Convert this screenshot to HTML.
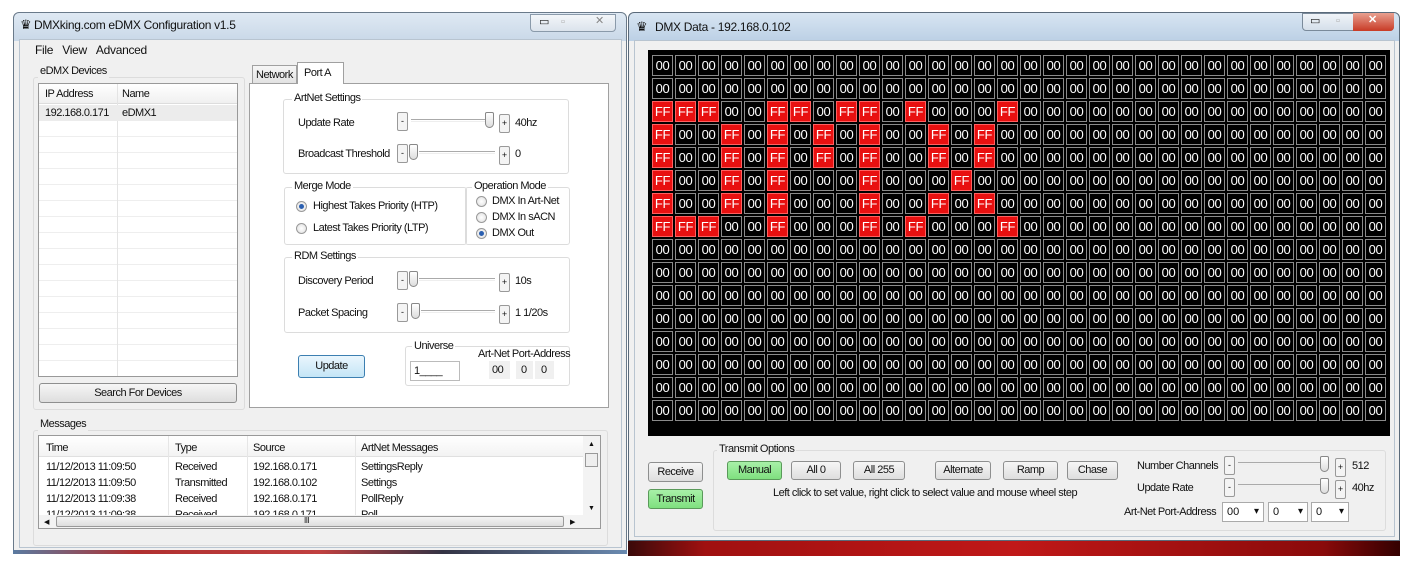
<!DOCTYPE html>
<html><head><meta charset="utf-8"><style>
*{box-sizing:border-box;margin:0;padding:0}
body{width:1414px;height:567px;background:#fff;position:relative;overflow:hidden;font-family:"Liberation Sans",sans-serif;font-size:11px;color:#111}
.a{position:absolute}
.t{position:absolute;white-space:nowrap;font-size:11px;letter-spacing:-0.5px;line-height:13px}
.grp{position:absolute;border:1px solid #dcdcdc;border-radius:3px}
.gl{position:absolute;background:#f0f0f0;padding:0 2px;white-space:nowrap;font-size:11px;letter-spacing:-0.5px;line-height:13px}
.btn{position:absolute;border:1px solid #8e8f8f;border-radius:3px;background:linear-gradient(#f6f6f6,#dedede);text-align:center;font-size:11px;letter-spacing:-0.5px;white-space:nowrap}
.grn{background:linear-gradient(#a8f0a8,#7fe07f);border-color:#5a9a5a}
.sb{position:absolute;border:1px solid #999;border-radius:2px;background:#f4f4f4;width:11px;height:19px;font-size:9px;text-align:center;line-height:17px}
.trk{position:absolute;height:3px;border-top:1px solid #aaa;border-bottom:1px solid #eee}
.th{position:absolute;width:9px;height:16px;border:1px solid #888;border-radius:2px 2px 5px 5px;background:linear-gradient(#fff,#ddd)}
.rad{position:absolute;width:11px;height:11px;border-radius:50%;border:1px solid #999;background:radial-gradient(#fff,#ddd)}
.rad.on::after{content:"";position:absolute;left:2px;top:2px;width:5px;height:5px;border-radius:50%;background:#2a5fb0}
.cb{position:absolute;border:1px solid #aaa;background:#fff;height:20px;font-size:11px;padding:3px 4px}
.cb::after{content:"▾";position:absolute;right:4px;top:3px;font-size:10px}
#grid{position:absolute;left:648px;top:50px;width:742px;height:386px;background:#000}
.c{position:absolute;width:21px;height:21px;border:1px solid #8a8a8a;color:#fff;font-size:13px;text-align:center;line-height:19px;letter-spacing:-0.3px}
.c.r{background:#e81010;border-color:#ff6060}
</style></head><body>
<!-- left window -->
<div class="a" style="left:13px;top:12px;width:614px;height:541px;border:1px solid #6a7a8a;border-radius:6px 6px 0 0;background:linear-gradient(#dfe9f3,#c9d8e8 28px,#f0f0f0 28px)"></div>
<div class="a" style="left:19px;top:39px;width:603px;height:509px;background:#f0f0f0;border:1px solid #b8c4d0"></div>
<div class="t" style="left:20px;top:18px;font-size:13px">♛</div>
<div class="t" style="left:34px;top:19px;font-size:12px;letter-spacing:-0.3px">DMXking.com eDMX Configuration v1.5</div>
<div class="a" style="left:530px;top:14px;width:86px;height:18px;border:1px solid #8a9aaa;border-radius:0 0 4px 4px;background:linear-gradient(#f3f6f9,#dbe3ec)"></div>
<div class="t" style="left:539px;top:16px">▭</div><div class="t" style="left:561px;top:16px;color:#aaa">▫</div><div class="t" style="left:595px;top:15px;color:#888">✕</div>
<div class="t" style="left:35px;top:44px;font-size:12px;letter-spacing:-0.3px">File&nbsp;&nbsp;&nbsp;View&nbsp;&nbsp;&nbsp;Advanced</div>
<div class="grp" style="left:33px;top:77px;width:212px;height:333px"></div>
<div class="gl" style="left:38px;top:65px">eDMX Devices</div>
<div class="a" style="left:38px;top:83px;width:200px;height:294px;background:#fff;border:1px solid #999;background-image:repeating-linear-gradient(#fff 0 15px,#eee 15px 16px);background-position:0 21px"></div>
<div class="a" style="left:39px;top:84px;width:198px;height:20px;background:linear-gradient(#fff,#f0f0f0);border-bottom:1px solid #ddd"></div>
<div class="a" style="left:117px;top:84px;width:1px;height:292px;background:#e4e4e4"></div>
<div class="a" style="left:39px;top:105px;width:198px;height:16px;background:#ececec"></div>
<div class="t" style="left:45px;top:88px">IP Address</div><div class="t" style="left:122px;top:88px">Name</div>
<div class="t" style="left:45px;top:107px">192.168.0.171</div><div class="t" style="left:122px;top:107px">eDMX1</div>
<div class="btn" style="left:39px;top:383px;width:198px;height:20px;line-height:18px">Search For Devices</div>
<div class="a" style="left:249px;top:83px;width:360px;height:325px;background:#fff;border:1px solid #a0a0a0"></div>
<div class="a" style="left:252px;top:65px;width:45px;height:19px;border:1px solid #a0a0a0;background:linear-gradient(#f6f6f6,#e2e2e2)"></div>
<div class="t" style="left:256px;top:69px">Network</div>
<div class="a" style="left:297px;top:62px;width:47px;height:22px;border:1px solid #a0a0a0;border-bottom:none;background:#fff"></div>
<div class="t" style="left:304px;top:67px">Port A</div>
<!-- artnet -->
<div class="grp" style="left:283px;top:99px;width:286px;height:75px"></div>
<div class="gl" style="left:292px;top:92px;background:#fff">ArtNet Settings</div>
<div class="t" style="left:298px;top:117px">Update Rate</div>
<div class="sb" style="left:397px;top:112px">-</div><div class="trk" style="left:411px;top:119px;width:78px"></div><div class="th" style="left:485px;top:112px"></div><div class="sb" style="left:499px;top:114px">+</div><div class="t" style="left:515px;top:117px">40hz</div>
<div class="t" style="left:298px;top:148px">Broadcast Threshold</div>
<div class="sb" style="left:397px;top:144px">-</div><div class="th" style="left:409px;top:144px"></div><div class="trk" style="left:419px;top:151px;width:76px"></div><div class="sb" style="left:499px;top:146px">+</div><div class="t" style="left:515px;top:148px">0</div>
<!-- merge -->
<div class="grp" style="left:284px;top:187px;width:183px;height:58px"></div>
<div class="gl" style="left:292px;top:180px;background:#fff">Merge Mode</div>
<div class="rad on" style="left:296px;top:201px"></div><div class="t" style="left:313px;top:200px">Highest Takes Priority (HTP)</div>
<div class="rad" style="left:296px;top:223px"></div><div class="t" style="left:313px;top:222px">Latest Takes Priority (LTP)</div>
<div class="grp" style="left:465px;top:187px;width:105px;height:58px"></div>
<div class="gl" style="left:472px;top:180px;background:#fff">Operation Mode</div>
<div class="rad" style="left:476px;top:196px"></div><div class="t" style="left:492px;top:195px">DMX In Art-Net</div>
<div class="rad" style="left:476px;top:212px"></div><div class="t" style="left:492px;top:211px">DMX In sACN</div>
<div class="rad on" style="left:476px;top:228px"></div><div class="t" style="left:492px;top:227px">DMX Out</div>
<!-- rdm -->
<div class="grp" style="left:284px;top:257px;width:286px;height:76px"></div>
<div class="gl" style="left:292px;top:250px;background:#fff">RDM Settings</div>
<div class="t" style="left:298px;top:275px">Discovery Period</div>
<div class="sb" style="left:397px;top:271px">-</div><div class="th" style="left:409px;top:271px"></div><div class="trk" style="left:419px;top:278px;width:76px"></div><div class="sb" style="left:499px;top:273px">+</div><div class="t" style="left:515px;top:275px">10s</div>
<div class="t" style="left:298px;top:307px">Packet Spacing</div>
<div class="sb" style="left:397px;top:303px">-</div><div class="th" style="left:411px;top:303px"></div><div class="trk" style="left:421px;top:310px;width:74px"></div><div class="sb" style="left:499px;top:305px">+</div><div class="t" style="left:515px;top:307px">1 1/20s</div>
<div class="btn" style="left:298px;top:355px;width:67px;height:23px;line-height:21px;border-color:#3c7fb1;background:linear-gradient(#eaf6fd,#c4e5f6)">Update</div>
<div class="grp" style="left:405px;top:346px;width:165px;height:40px"></div>
<div class="gl" style="left:412px;top:340px;background:#fff">Universe</div>
<div class="t" style="left:478px;top:348px">Art-Net Port-Address</div>
<div class="a" style="left:410px;top:361px;width:50px;height:20px;border:1px solid #bbb;background:#fff"></div><div class="t" style="left:414px;top:365px">1____</div>
<div class="a" style="left:489px;top:361px;width:21px;height:18px;background:#f0f0f0"></div><div class="t" style="left:492px;top:364px">00</div>
<div class="a" style="left:516px;top:361px;width:17px;height:18px;background:#f0f0f0"></div><div class="t" style="left:521px;top:364px">0</div>
<div class="a" style="left:535px;top:361px;width:19px;height:18px;background:#f0f0f0"></div><div class="t" style="left:541px;top:364px">0</div>
<!-- messages -->
<div class="grp" style="left:33px;top:430px;width:575px;height:116px"></div>
<div class="gl" style="left:38px;top:418px">Messages</div>
<div class="a" style="left:38px;top:435px;width:563px;height:94px;background:#fff;border:1px solid #999"></div>
<div class="a" style="left:39px;top:436px;width:544px;height:21px;background:linear-gradient(#fff,#f3f3f3);border-bottom:1px solid #e0e0e0"></div>
<div class="a" style="left:168px;top:436px;width:1px;height:80px;background:#e6e6e6"></div><div class="a" style="left:247px;top:436px;width:1px;height:80px;background:#e6e6e6"></div><div class="a" style="left:355px;top:436px;width:1px;height:80px;background:#e6e6e6"></div>
<div class="t" style="left:46px;top:442px">Time</div><div class="t" style="left:175px;top:442px">Type</div><div class="t" style="left:253px;top:442px">Source</div><div class="t" style="left:361px;top:442px">ArtNet Messages</div>
<div class="t" style="left:46px;top:461px">11/12/2013 11:09:50</div><div class="t" style="left:175px;top:461px">Received</div><div class="t" style="left:253px;top:461px">192.168.0.171</div><div class="t" style="left:361px;top:461px">SettingsReply</div>
<div class="t" style="left:46px;top:477px">11/12/2013 11:09:50</div><div class="t" style="left:175px;top:477px">Transmitted</div><div class="t" style="left:253px;top:477px">192.168.0.102</div><div class="t" style="left:361px;top:477px">Settings</div>
<div class="t" style="left:46px;top:493px">11/12/2013 11:09:38</div><div class="t" style="left:175px;top:493px">Received</div><div class="t" style="left:253px;top:493px">192.168.0.171</div><div class="t" style="left:361px;top:493px">PollReply</div>
<div class="a" style="left:39px;top:509px;width:544px;height:6px;overflow:hidden"><div class="t" style="left:7px;top:0">11/12/2013 11:09:38</div><div class="t" style="left:136px;top:0">Received</div><div class="t" style="left:214px;top:0">192.168.0.171</div><div class="t" style="left:322px;top:0">Poll</div></div>
<div class="a" style="left:583px;top:436px;width:17px;height:80px;background:#f3f3f3"></div>
<div class="t" style="left:588px;top:438px;font-size:7px">▲</div><div class="t" style="left:588px;top:502px;font-size:7px">▼</div>
<div class="a" style="left:585px;top:453px;width:13px;height:14px;border:1px solid #999;background:#eee"></div>
<div class="a" style="left:39px;top:515px;width:561px;height:13px;background:#f3f3f3"></div>
<div class="t" style="left:44px;top:516px;font-size:7px">◀</div><div class="t" style="left:570px;top:516px;font-size:7px">▶</div>
<div class="a" style="left:56px;top:516px;width:508px;height:11px;border:1px solid #999;border-radius:2px;background:linear-gradient(#f4f4f4,#ddd)"></div>
<div class="t" style="left:304px;top:514px;font-size:8px">III</div>
<div class="a" style="left:13px;top:550px;width:614px;height:4px;background:linear-gradient(90deg,#5a7aa0,#b03030 20%,#c04040 50%,#334 70%,#6a8ab0)"></div>
<!-- right window -->
<div class="a" style="left:628px;top:12px;width:772px;height:529px;border:1px solid #5a6a7a;border-radius:6px 6px 0 0;background:linear-gradient(#d8e5f2,#bcd0e5 28px,#f0f0f0 28px)"></div>
<div class="a" style="left:634px;top:40px;width:761px;height:497px;background:#f0f0f0;border:1px solid #b8c4d0"></div>
<div class="t" style="left:636px;top:20px;font-size:13px">♛</div>
<div class="t" style="left:655px;top:21px;font-size:12px;letter-spacing:-0.3px">DMX Data - 192.168.0.102</div>
<div class="a" style="left:1302px;top:13px;width:92px;height:18px;border:1px solid #7a8a9a;border-radius:0 0 4px 4px;background:linear-gradient(#f0f4f8,#d5dfea)"></div>
<div class="a" style="left:1353px;top:13px;width:41px;height:18px;border-radius:0 0 4px 0;background:linear-gradient(#e8a090,#c83a25)"></div>
<div class="t" style="left:1310px;top:15px">▭</div><div class="t" style="left:1336px;top:15px;color:#aaa">▫</div><div class="t" style="left:1368px;top:14px;color:#fff;font-weight:bold">✕</div>
<div id="grid"></div>
<div class="btn" style="left:648px;top:462px;width:55px;height:20px;line-height:18px">Receive</div>
<div class="btn grn" style="left:648px;top:489px;width:55px;height:20px;line-height:18px">Transmit</div>
<div class="grp" style="left:713px;top:450px;width:673px;height:81px"></div>
<div class="gl" style="left:717px;top:443px">Transmit Options</div>
<div class="btn grn" style="left:727px;top:461px;width:55px;height:19px;line-height:17px">Manual</div>
<div class="btn" style="left:791px;top:461px;width:50px;height:19px;line-height:17px">All 0</div>
<div class="btn" style="left:853px;top:461px;width:52px;height:19px;line-height:17px">All 255</div>
<div class="btn" style="left:935px;top:461px;width:56px;height:19px;line-height:17px">Alternate</div>
<div class="btn" style="left:1003px;top:461px;width:55px;height:19px;line-height:17px">Ramp</div>
<div class="btn" style="left:1067px;top:461px;width:51px;height:19px;line-height:17px">Chase</div>
<div class="t" style="left:773px;top:487px">Left click to set value, right click to select value and mouse wheel step</div>
<div class="t" style="left:1137px;top:460px">Number Channels</div>
<div class="sb" style="left:1224px;top:456px">-</div><div class="trk" style="left:1238px;top:462px;width:82px"></div><div class="th" style="left:1320px;top:456px"></div><div class="sb" style="left:1335px;top:458px">+</div><div class="t" style="left:1352px;top:460px">512</div>
<div class="t" style="left:1137px;top:482px">Update Rate</div>
<div class="sb" style="left:1224px;top:478px">-</div><div class="trk" style="left:1238px;top:484px;width:82px"></div><div class="th" style="left:1320px;top:478px"></div><div class="sb" style="left:1335px;top:480px">+</div><div class="t" style="left:1352px;top:482px">40hz</div>
<div class="t" style="left:1124px;top:506px">Art-Net Port-Address</div>
<div class="cb" style="left:1222px;top:502px;width:42px">00</div>
<div class="cb" style="left:1268px;top:502px;width:40px">0</div>
<div class="cb" style="left:1311px;top:502px;width:38px">0</div>
<div class="a" style="left:628px;top:541px;width:772px;height:15px;background:linear-gradient(90deg,#3a0a0a,#a01010 10%,#c01818 50%,#8a0a0a 90%,#300)"></div>
<script>
var g=document.getElementById('grid');
var ff={2:[0,1,2,5,6,8,9,11,15],3:[0,3,5,7,9,12,14],4:[0,3,5,7,9,12,14],5:[0,3,5,9,13],6:[0,3,5,9,12,14],7:[0,1,2,5,9,11,15]};
var h='';
for(var r=0;r<16;r++)for(var c=0;c<32;c++){
 var on=ff[r]&&ff[r].indexOf(c)>=0;
 h+='<div class="c'+(on?' r':'')+'" style="left:'+(4+c*23)+'px;top:'+(5+r*23)+'px">'+(on?'FF':'00')+'</div>';
}
g.innerHTML=h;
</script>
</body></html>
